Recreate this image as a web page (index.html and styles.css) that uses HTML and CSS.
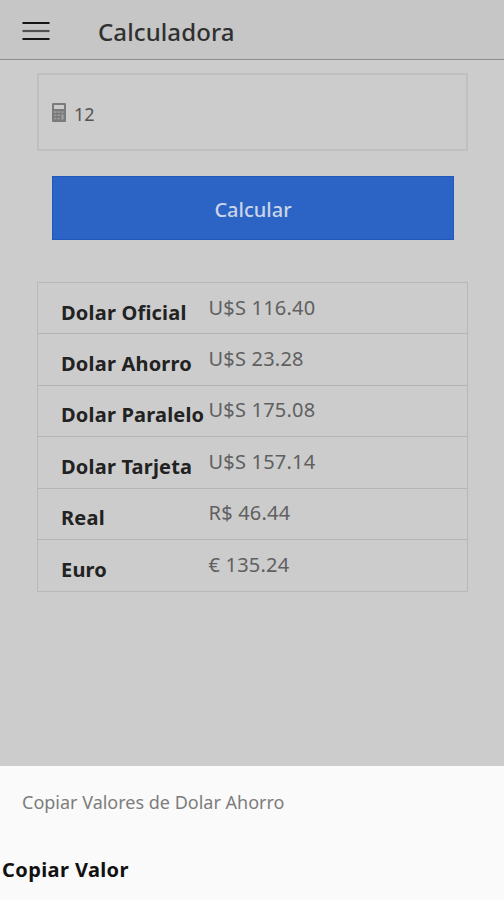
FILE: index.html
```html
<!DOCTYPE html>
<html lang="es">

<head>
    <meta charset="UTF-8">
    <meta name="viewport" content="width=device-width, initial-scale=1.0">
    <title>Calculadora</title>
    <link rel="stylesheet" href="styles.css">
</head>

<body>
    <header class="toolbar">
        <svg class="menu-icon" width="28" height="20" viewBox="0 0 28 20">
            <path d="M0.5 2H27.5M0.5 18H27.5" stroke="#141414" stroke-width="2.2" />
            <path d="M0.5 10H27.5" stroke="#505050" stroke-width="2.2" />
        </svg>
        <h1 class="title">Calculadora</h1>
    </header>

    <main class="content">
        <div class="amount">
            <svg class="calc-icon" width="14" height="19" viewBox="0 0 14 19">
                <rect x="0" y="0" width="14" height="19" rx="1" fill="#7b7b7b" />
                <rect x="2" y="2" width="10" height="4" fill="#cbcbcb" />
                <path d="M2 9H12M2 12.3H12M2 15.7H8" stroke="#a0a0a0" stroke-width="1.3" stroke-dasharray="2.4 1.2" />
                <rect x="9.3" y="11.6" width="2.3" height="5" fill="#a0a0a0" />
            </svg>
            <span class="amount-value">12</span>
        </div>

        <button type="button" class="calculate">Calcular</button>

        <div class="list">
            <div class="row"><span class="name">Dolar Oficial</span><span class="value">U$S 116.40</span></div>
            <div class="row"><span class="name">Dolar Ahorro</span><span class="value">U$S 23.28</span></div>
            <div class="row"><span class="name">Dolar Paralelo</span><span class="value">U$S 175.08</span></div>
            <div class="row"><span class="name">Dolar Tarjeta</span><span class="value">U$S 157.14</span></div>
            <div class="row"><span class="name">Real</span><span class="value">R$ 46.44</span></div>
            <div class="row"><span class="name">Euro</span><span class="value">€ 135.24</span></div>
        </div>
    </main>

    <!-- Action sheet -->
    <div class="sheet">
        <div class="sheet-title">Copiar Valores de Dolar Ahorro</div>
        <div class="sheet-option">Copiar Valor</div>
    </div>
</body>

</html>
```
FILE: styles.css
```css
* {
    box-sizing: border-box;
}

body {
    margin: 0;
    height: 900px;
    display: flex;
    flex-direction: column;
    overflow: hidden;
    background-color: #cccccc;
    font-family: "Noto Sans", sans-serif;
    color: #222222;
}

.toolbar {
    display: flex;
    align-items: center;
    height: 60px;
    padding: 2px 22px 0;
    background-color: #c6c6c6;
    border-bottom: 1px solid #8c8c8c;
}

.menu-icon {
    margin-right: 48px;
}

.title {
    margin: 3px 0 0;
    font-size: 24px;
    font-weight: 500;
    line-height: 32px;
    letter-spacing: 0.1px;
    color: #303030;
}

.content {
    flex: 1;
    padding: 13px 36px 0 37px;
}

.amount {
    display: flex;
    align-items: center;
    height: 78px;
    padding: 0 13px;
    border: 2px solid #c0c0c0;
}

.calc-icon {
    margin-right: 8px;
}

.amount-value {
    margin-top: 3px;
    font-size: 18px;
    line-height: 24px;
    color: #555555;
}

.calculate {
    display: block;
    width: 402px;
    height: 64px;
    margin: 25px 0 42px 15px;
    padding: 3px 0 0;
    border: 1px solid #2258bd;
    background-color: #2c64c6;
    color: #cbd4e5;
    font-family: inherit;
    font-size: 20px;
    font-weight: 500;
}

.list {
    border: 1px solid #b8b8b8;
}

.row {
    display: flex;
    height: 51.4px;
    padding-left: 23px;
    border-bottom: 1px solid #b5b5b5;
}

.row:last-child {
    border-bottom: none;
}

.name {
    width: 147.5px;
    padding-top: 15.6px;
    font-size: 20px;
    font-weight: bold;
    line-height: 28px;
    letter-spacing: 0.2px;
    white-space: nowrap;
}

.value {
    padding-top: 10.6px;
    font-size: 20px;
    line-height: 28px;
    letter-spacing: 0.2px;
    color: #606060;
}

.sheet {
    height: 134px;
    background-color: #fafafa;
}

.sheet-title {
    padding: 24px 22px 0;
    font-size: 18px;
    line-height: 24px;
    color: #7d7d7d;
}

.sheet-option {
    padding: 42px 2px 0;
    font-size: 20px;
    font-weight: bold;
    line-height: 28px;
    letter-spacing: 0.4px;
    color: #111111;
}
```
